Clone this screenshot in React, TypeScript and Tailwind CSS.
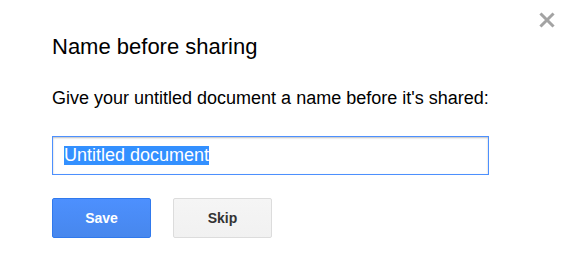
import React from "react";

function CloseIcon() {
  return (
    <svg width="16" height="16" viewBox="0 0 16 16" className="text-[#a3a3a3]">
      <path d="M2.5 2.5L13.5 13.5M13.5 2.5L2.5 13.5" stroke="currentColor" strokeWidth={3} strokeLinecap="square" />
    </svg>
  );
}

export default function App() {
  return (
    <div className="relative h-[258px] w-[565px] bg-white font-['Liberation_Sans',Arial,sans-serif] text-black">
      <button type="button" className="absolute right-[10px] top-[12px] flex h-[16px] w-[16px] items-center justify-center">
        <CloseIcon />
      </button>
      <div className="flex flex-col pl-[52px] pt-[34px]">
        <h2 className="text-[22px] leading-[26px] font-normal">Name before sharing</h2>
        <p className="mt-[27px] text-[18px] leading-[22px]">Give your untitled document a name before it's shared:</p>
        <div className="mt-[27px] flex h-[39px] w-[437px] items-center border border-[#4d90fe] pl-[11px] shadow-[inset_0_1px_2px_rgba(0,0,0,0.25)]">
          <span className="inline-block h-[19px] bg-[#3390ff] text-[18px] leading-[19px] text-white">Untitled document</span>
        </div>
        <div className="mt-[23px] flex gap-[22px]">
          <button
            type="button"
            className="flex h-[40px] w-[99px] items-center justify-center rounded-[2px] border border-[#3079ed] bg-gradient-to-b from-[#4d90fe] to-[#4787ed] text-[14px] font-bold text-white"
          >
            Save
          </button>
          <button
            type="button"
            className="flex h-[40px] w-[99px] items-center justify-center rounded-[2px] border border-[#dcdcdc] bg-gradient-to-b from-[#f5f5f5] to-[#f1f1f1] text-[14px] font-bold text-[#333]"
          >
            Skip
          </button>
        </div>
      </div>
    </div>
  );
}
